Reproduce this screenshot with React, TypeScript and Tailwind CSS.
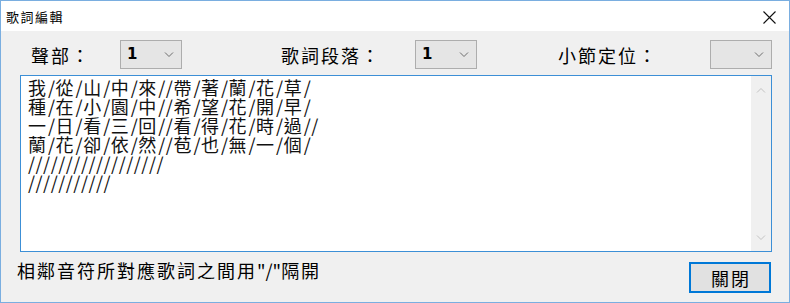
import React from "react";

const CJK = '"Noto Sans CJK TC", "Noto Sans CJK SC", sans-serif';

function Chevron({ up = false, color = "#6d6d6d" }: { up?: boolean; color?: string }) {
  return (
    <svg width="10" height="6" viewBox="0 0 10 6" className="block">
      <path
        d={up ? "M1 5.5 L5 1.5 L9 5.5" : "M1 0.5 L5 4.5 L9 0.5"}
        fill="none"
        stroke={color}
        strokeWidth="1"
      />
    </svg>
  );
}

function Select({ value }: { value?: string }) {
  return (
    <div className="w-[62px] h-[29px] border border-[#adadad] bg-[#e5e5e5] flex items-center justify-between pl-[6px] pr-[7px]">
      <span className="text-[15px] leading-none font-semibold text-black" style={{ fontFamily: '"DejaVu Sans", sans-serif' }}>
        {value ?? ""}
      </span>
      <Chevron />
    </div>
  );
}

function Mixed({ text, tight = false }: { text: string; tight?: boolean }) {
  const parts: { s: string; ascii: boolean }[] = [];
  for (const ch of text) {
    const ascii = ch.charCodeAt(0) < 128;
    const last = parts[parts.length - 1];
    if (last && last.ascii === ascii) last.s += ch;
    else parts.push({ s: ch, ascii });
  }
  return (
    <>
      {parts.map((p, i) =>
        p.ascii ? (
          <span
            key={i}
            className={
              tight
                ? "inline-block align-top h-[19px] leading-[19px] tracking-[0px]"
                : "inline-block align-top h-[19px] leading-[19px] tracking-[0.5px]"
            }
          >
            {p.s}
          </span>
        ) : (
          <span key={i} className="inline-block align-top h-[19px] leading-[19px] tracking-[2px]">
            {p.s}
          </span>
        )
      )}
    </>
  );
}

const lines = [
  "我/從/山/中/來//帶/著/蘭/花/草/",
  "種/在/小/園/中//希/望/花/開/早/",
  "一/日/看/三/回//看/得/花/時/過//",
  "蘭/花/卻/依/然//苞/也/無/一/個/",
  "//////////////////",
  "///////////",
];

export default function App() {
  return (
    <div
      className="w-[790px] h-[303px] border border-[#7aaee0] bg-[#f0f0f0] flex flex-col text-black"
      style={{ fontFamily: CJK }}
    >
      <div className="h-[30px] bg-white flex items-center justify-between pl-[5px] pr-[13px]">
        <span className="text-[13px] tracking-[1.5px] leading-none text-black">歌詞編輯</span>
        <svg width="13" height="13" viewBox="0 0 13 13" className="block mt-[3px]">
          <path d="M0.5 0.5 L12.5 12.5 M12.5 0.5 L0.5 12.5" stroke="#111" strokeWidth="1.1" />
        </svg>
      </div>

      <div className="mt-[9px] h-[29px] flex items-center text-[18px] tracking-[2px] leading-none">
        <span className="ml-[30px] w-[89px]">聲部：</span>
        <Select value="1" />
        <span className="ml-[99px] w-[134px]">歌詞段落：</span>
        <Select value="1" />
        <span className="ml-[81px] w-[152px]">小節定位：</span>
        <Select />
      </div>

      <div className="mt-[6px] ml-[19px] w-[752px] h-[177px] border border-[#3c8fd6] bg-white flex">
        <div className="flex-1 pl-[7px] pt-[2px] text-[18px] leading-[19px] text-[#111]">
          {lines.map((l, i) => (
            <div key={i} className="whitespace-pre h-[19px]">
              <Mixed text={l} />
            </div>
          ))}
        </div>
        <div className="w-[20px] bg-[#f0f0f0] flex flex-col items-center justify-between pt-[11px] pb-[10px]">
          <Chevron up color="#c2c2c2" />
          <Chevron color="#c2c2c2" />
        </div>
      </div>

      <div className="flex items-start justify-between mt-[10px] pl-[16px] pr-[18px]">
        <span className="text-[18px] leading-[20px] -mt-[1px] whitespace-pre">
          <Mixed text={'相鄰音符所對應歌詞之間用"/"隔開'} tight />
        </span>
        <div className="w-[82px] h-[31px] border-2 border-[#0078d7] bg-[#e1e1e1] flex items-center justify-center text-[18px] tracking-[2px] leading-none">
          <span className="ml-[2px]">關閉</span>
        </div>
      </div>
    </div>
  );
}
